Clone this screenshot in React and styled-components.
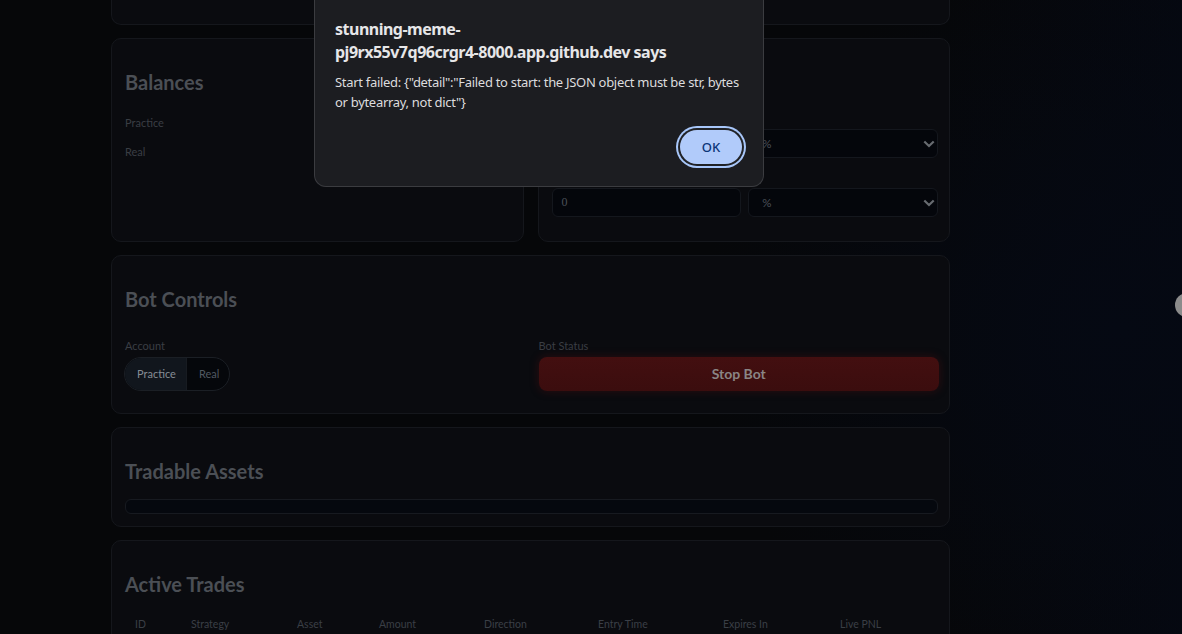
import React from "react";
import styled, { createGlobalStyle } from "styled-components";

const Global = createGlobalStyle`
  html, body { margin: 0; padding: 0; }
  body {
    background: linear-gradient(90deg, #060709 0%, #060709 80%, #050810 100%);
    font-family: Lato, "Noto Sans", sans-serif;
    overflow: hidden;
    height: 634px;
  }
  * { box-sizing: border-box; }
`;

const Page = styled.div`
  width: 1182px;
  height: 634px;
  overflow: hidden;
  padding-left: 111px;
  background: radial-gradient(ellipse 420px 380px at 1120px 330px, #050913 0%, rgba(5,9,19,0) 100%);
`;

const Main = styled.main`
  width: 839px;
  display: flex;
  flex-direction: column;
  gap: 13px;
`;

const Card = styled.section`
  display: flex;
  flex-direction: column;
  background: #0a0b0f;
  border: 1px solid #15171c;
  border-radius: 10px;
  padding: ${(p) => p.$pad || "30px 11px 22px 13px"};
  ${(p) =>
    p.$clipped &&
    `border-top: none; border-radius: 0 0 10px 10px; height: 25px; padding: 0;`}
`;

const Grid2 = styled.div`
  display: grid;
  grid-template-columns: 1fr 1fr;
  gap: ${(p) => p.$gap || "14px"};
`;

const Title = styled.h2`
  margin: 0;
  align-self: flex-start;
  font-family: Lato, "Noto Sans", sans-serif;
  font-size: 20px;
  line-height: 26px;
  font-weight: 700;
  color: #4b4f55;
`;

const BalanceRow = styled.div`
  align-self: flex-start;
  font-size: 11px;
  line-height: 16px;
  color: #3a3e44;
  margin-top: ${(p) => p.$mt || "13px"};
`;

const FieldLabel = styled.div`
  align-self: flex-start;
  font-size: 11px;
  line-height: 16px;
  color: #3a3e44;
  margin: ${(p) => p.$m || "0"};
`;

const Spacer = styled.div`
  height: ${(p) => p.$h};
  flex: none;
`;

const FieldRow = styled.div`
  display: grid;
  grid-template-columns: 1fr 1fr;
  gap: 7px;
`;

const Input = styled.div`
  height: 29px;
  background: #04060b;
  border: 1px solid #14171d;
  border-radius: 6px;
  padding: 0 ${(p) => (p.$select ? "2px" : "9px")} 0 9px;
  display: flex;
  align-items: center;
  justify-content: space-between;
  font-family: "Liberation Serif", serif;
  font-size: 12px;
  color: #4b5058;
`;

const SelectText = styled.span`
  font-family: Lato, "Noto Sans", sans-serif;
  font-size: 11.5px;
  padding-left: 4px;
`;

const Chevron = () => (
  <svg width="12" height="8" viewBox="0 0 12 8">
    <path d="M1.3 1.5 L6 6 L10.7 1.5" fill="none" stroke="#676b70" strokeWidth="2.2" />
  </svg>
);

const Select = ({ value }) => (
  <Input $select>
    <SelectText>{value}</SelectText>
    <Chevron />
  </Input>
);

const ControlCol = styled.div`
  display: flex;
  flex-direction: column;
`;

const Toggle = styled.div`
  display: inline-flex;
  align-self: flex-start;
  height: 34px;
  margin-left: -1px;
  border: 1px solid #1b1f25;
  border-radius: 17px;
  overflow: hidden;
  background: #05070b;
`;

const ToggleOpt = styled.div`
  display: flex;
  align-items: center;
  padding: 0 10px 0 12px;
  height: 100%;
  background: ${(p) => (p.$active ? "#11161d" : "transparent")};
  border-right: ${(p) => (p.$active ? "1px solid #171b21" : "none")};
  font-size: 11px;
  color: ${(p) => (p.$active ? "#868d95" : "#525962")};
`;

const StopButton = styled.button`
  height: 34px;
  width: 100%;
  border: none;
  border-radius: 8px;
  background: linear-gradient(180deg, #430f10 0%, #3b0d0e 100%);
  box-shadow: 0 0 10px rgba(110, 18, 18, 0.35);
  color: #8a8585;
  font-family: Lato, "Noto Sans", sans-serif;
  font-weight: 700;
  font-size: 14px;
`;

const Bar = styled.div`
  margin-top: 15px;
  height: 15px;
  border: 1px solid #171a20;
  background: #05080e;
  border-radius: 6px;
`;

const Table = styled.table`
  margin-top: 20px;
  width: 100%;
  border-collapse: collapse;
  table-layout: fixed;
`;

const Th = styled.th`
  text-align: left;
  font-weight: 400;
  font-size: 10.5px;
  line-height: 14px;
  color: #3a3f46;
  padding: 0 10px;
`;

const Dialog = styled.div`
  position: fixed;
  top: 0;
  left: 314px;
  width: 450px;
  height: 187px;
  background: #1c1d21;
  border: 1px solid #3b3c40;
  border-top: none;
  border-radius: 0 0 12px 12px;
  padding: 18px 21px 0 20px;
  display: flex;
  flex-direction: column;
  font-family: "Noto Sans", sans-serif;
`;

const DialogTitle = styled.div`
  font-size: 16px;
  line-height: 23px;
  font-weight: 700;
  color: #e6e6e8;
  letter-spacing: -0.5px;
`;

const DialogMsg = styled.div`
  margin-top: 8px;
  font-size: 13px;
  line-height: 20px;
  color: #dcdcde;
  letter-spacing: -0.3px;
`;

const DialogActions = styled.div`
  margin-top: auto;
  margin-bottom: 22px;
  display: flex;
  justify-content: flex-end;
`;

const OkButton = styled.button`
  width: 62px;
  height: 34px;
  border: none;
  border-radius: 17px;
  background: #b1cbfa;
  color: #0b3577;
  font-family: "Noto Sans", sans-serif;
  font-size: 13px;
  font-weight: 500;
  box-shadow: 0 0 0 2px #202226, 0 0 0 4px #a8c7fa;
`;

const EdgeDot = styled.div`
  position: fixed;
  top: 293px;
  left: 1175px;
  width: 24px;
  height: 24px;
  border-radius: 50%;
  background: #8b8b8b;
`;

const cols = [
  ["ID", 56],
  ["Strategy", 106],
  ["Asset", 82],
  ["Amount", 105],
  ["Direction", 114],
  ["Entry Time", 125],
  ["Expires In", 117],
  ["Live PNL", 108],
];

export default function App() {
  return (
    <>
      <Global />
      <Page>
        <Main>
          <Card $clipped />
          <Grid2>
            <Card>
              <Title>Balances</Title>
              <BalanceRow $mt="20px">Practice</BalanceRow>
              <BalanceRow $mt="13px">Real</BalanceRow>
            </Card>
            <Card $pad="30px 11px 23.5px 13px">
              <Spacer $h="26px" />
              <Spacer $h="34px" />
              <FieldRow>
                <Input>0</Input>
                <Select value="%" />
              </FieldRow>
              <Spacer $h="30px" />
              <FieldRow>
                <Input>0</Input>
                <Select value="%" />
              </FieldRow>
            </Card>
          </Grid2>
          <Card $pad="30px 10px 22px 13px">
            <Title>Bot Controls</Title>
            <Grid2 $gap="13px">
              <ControlCol>
                <FieldLabel $m="26px 0 3px">Account</FieldLabel>
                <Toggle>
                  <ToggleOpt $active>Practice</ToggleOpt>
                  <ToggleOpt>Real</ToggleOpt>
                </Toggle>
              </ControlCol>
              <ControlCol>
                <FieldLabel $m="26px 0 3px">Bot Status</FieldLabel>
                <StopButton>Stop Bot</StopButton>
              </ControlCol>
            </Grid2>
          </Card>
          <Card $pad="30px 11px 12px 13px">
            <Title>Tradable Assets</Title>
            <Bar />
          </Card>
          <Card $pad="30px 11px 40px 13px">
            <Title>Active Trades</Title>
            <Table>
              <colgroup>
                {cols.map(([n, w]) => (
                  <col key={n} style={{ width: w }} />
                ))}
              </colgroup>
              <thead>
                <tr>
                  {cols.map(([n]) => (
                    <Th key={n}>{n}</Th>
                  ))}
                </tr>
              </thead>
            </Table>
          </Card>
        </Main>
      </Page>
      <Dialog role="alertdialog">
        <DialogTitle>
          stunning-meme-
          <br />
          pj9rx55v7q96crgr4-8000.app.github.dev says
        </DialogTitle>
        <DialogMsg>
          Start failed: {'{"detail":"Failed to start: the JSON object must be str, bytes or bytearray, not dict"}'}
        </DialogMsg>
        <DialogActions>
          <OkButton>OK</OkButton>
        </DialogActions>
      </Dialog>
      <EdgeDot />
    </>
  );
}
